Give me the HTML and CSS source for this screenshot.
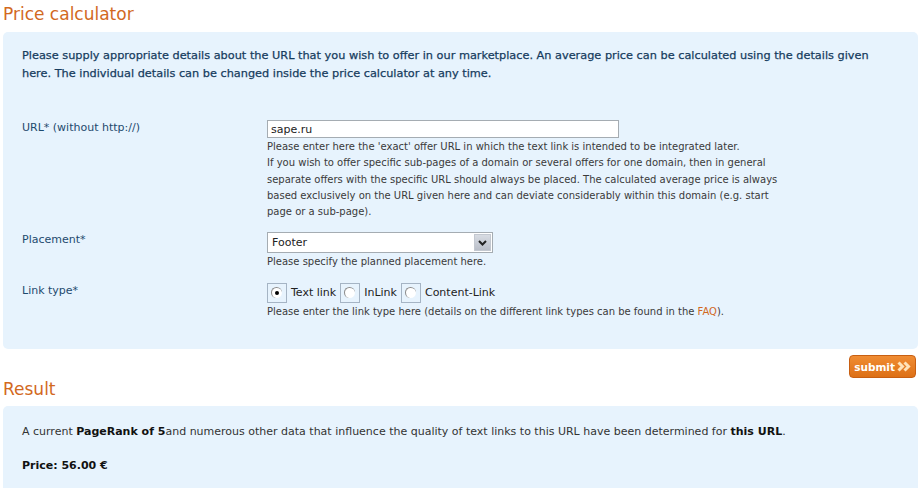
FILE: index.html
```html
<!DOCTYPE html>
<html lang="en">
<head>
    <meta charset="UTF-8">
    <title>Price calculator</title>
    <link rel="stylesheet" href="styles.css">
</head>
<body>
    <h1 class="section-title">Price calculator</h1>
    <div class="panel">
        <p class="intro">Please supply appropriate details about the URL that you wish to offer in our marketplace. An average price can be calculated using the details given here. The individual details can be changed inside the price calculator at any time.</p>
        <div class="form-grid">
            <label class="field-label">URL* (without http://)</label>
            <div class="field">
                <input class="text-input" type="text" value="sape.ru">
                <p class="hint">Please enter here the 'exact' offer URL in which the text link is intended to be integrated later.<br>If you wish to offer specific sub-pages of a domain or several offers for one domain, then in general separate offers with the specific URL should always be placed. The calculated average price is always based exclusively on the URL given here and can deviate considerably within this domain (e.g. start page or a sub-page).</p>
            </div>

            <label class="field-label">Placement*</label>
            <div class="field">
                <div class="select">
                    <span class="select-value">Footer</span>
                    <span class="select-arrow">
                        <svg width="9" height="6" viewBox="0 0 9 6"><path d="M1 1l3.5 3.5L8 1" fill="none" stroke="#222" stroke-width="2"/></svg>
                    </span>
                </div>
                <p class="hint">Please specify the planned placement here.</p>
            </div>

            <label class="field-label">Link type*</label>
            <div class="field">
                <div class="radios">
                    <span class="radio-box"><span class="radio checked"></span></span>
                    <span class="radio-text">Text link</span>
                    <span class="radio-box"><span class="radio"></span></span>
                    <span class="radio-text">InLink</span>
                    <span class="radio-box"><span class="radio"></span></span>
                    <span class="radio-text">Content-Link</span>
                </div>
                <p class="hint">Please enter the link type here (details on the different link types can be found in the <a href="#">FAQ</a>).</p>
            </div>
        </div>
    </div>
    <div class="actions">
        <button class="submit-btn">submit
            <svg width="15" height="11" viewBox="0 0 15 11"><path d="M1.5 1.5l4 4-4 4M7.5 1.5l4 4-4 4" fill="none" stroke="#ffe2b8" stroke-width="3"/></svg>
        </button>
    </div>
    <h1 class="section-title result-title">Result</h1>
    <div class="panel result">
        <p class="result-text">A current <b>PageRank of 5</b>and numerous other data that influence the quality of text links to this URL have been determined for <b>this URL</b>.</p>
        <p class="price"><b>Price: 56.00 €</b></p>
    </div>
</body>
</html>
```

FILE: styles.css
```css
:root{
    --orange: #d2691e;
    --panel-bg: #e7f3fd;
    --label-color: #1e4a6e;
    --hint-color: #3a3a3a;
}

*{
    box-sizing: border-box;
    margin: 0;
    font-family: 'DejaVu Sans', sans-serif;
}

body{
    background: #fff;
    padding: 3px 5px 0 3px;
}

.section-title{
    color: var(--orange);
    font-size: 17px;
    font-weight: normal;
    line-height: 22px;
    margin-bottom: 7px;
}

.panel{
    background-color: var(--panel-bg);
    border-radius: 5px;
    padding: 15px 19px 29px 19px;
}

.intro{
    color: #163c5e;
    font-size: 11.3px;
    -webkit-text-stroke: 0.25px #163c5e;
    line-height: 18px;
    margin-bottom: 37px;
}

.form-grid{
    display: grid;
    grid-template-columns: 245px 1fr;
    row-gap: 12px;
}

.field-label{
    color: var(--label-color);
    font-size: 11px;
    padding-top: 1px;
}

.text-input{
    display: block;
    width: 352px;
    height: 18px;
    border: 1px solid #a5acb2;
    background: #fff;
    font-size: 11px;
    padding: 0 3px;
    color: #222;
}

.hint{
    color: var(--hint-color);
    font-size: 10px;
    line-height: 16.3px;
    width: 520px;
    margin-top: 1px;
}

.hint a{
    color: #d2691e;
    text-decoration: none;
}

.select{
    display: flex;
    align-items: center;
    width: 226px;
    height: 21px;
    border: 1px solid #a5acb2;
    background: #fff;
}

.select-value{
    flex: 1;
    font-size: 11px;
    padding-left: 4px;
    color: #222;
}

.select-arrow{
    width: 17px;
    height: 17px;
    margin-right: 1px;
    background: linear-gradient(#d8dce3, #b9bec8);
    border: 1px solid #c3c8d0;
    display: flex;
    align-items: center;
    justify-content: center;
}

.radios{
    display: flex;
    align-items: center;
    gap: 4px;
    height: 20px;
}

.radio-box{
    width: 20px;
    height: 20px;
    border: 1px solid #a5b4c4;
    display: flex;
    align-items: flex-start;
    justify-content: flex-start;
    padding: 3px 0 0 3px;
}

.radio{
    width: 11px;
    height: 11px;
    border-radius: 50%;
    border-top: 1px solid #8a8a8a;
    border-left: 1px solid #8a8a8a;
    background: #fff;
    position: relative;
}

.radio.checked::after{
    content: '';
    position: absolute;
    left: 3px;
    top: 3px;
    width: 4px;
    height: 4px;
    border-radius: 50%;
    background: #000;
}

.radio-text{
    font-size: 11px;
    color: #222;
}

.actions{
    display: flex;
    justify-content: flex-end;
    padding: 6px 2px 0 0;
    height: 29px;
}

.submit-btn{
    display: flex;
    align-items: center;
    gap: 2px;
    height: 23px;
    padding: 0 3px 0 4px;
    border: 1px solid #c85f12;
    border-radius: 4px;
    background: linear-gradient(#f08c33, #dd7016);
    color: #fff;
    font-size: 10.5px;
    font-weight: bold;
}

.result-title{
    margin-bottom: 6px;
}

.result{
    padding: 18px 19px 20px 19px;
}

.result-text, .price{
    font-size: 11px;
    color: #333;
    line-height: 16px;
}

.result b{
    color: #111;
}

.price{
    margin-top: 18px;
}
```
